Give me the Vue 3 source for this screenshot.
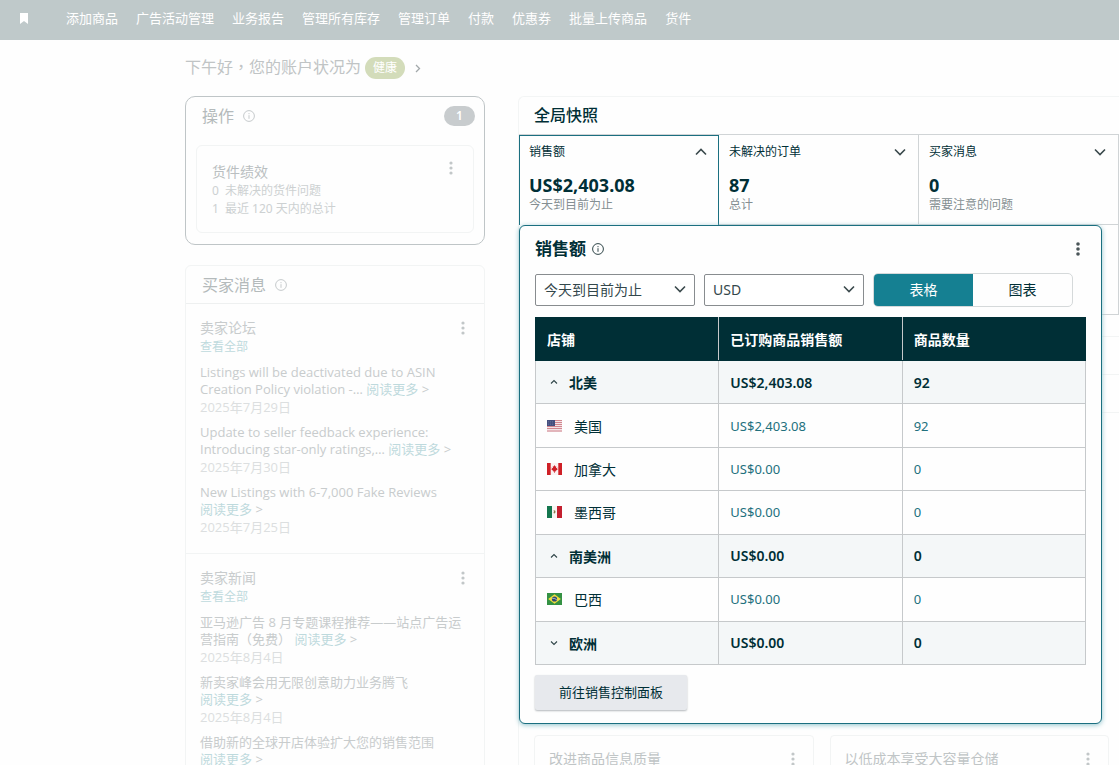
<script setup>
import { ref } from 'vue'

const nav = ['添加商品', '广告活动管理', '业务报告', '管理所有库存', '管理订单', '付款', '优惠券', '批量上传商品', '货件']

const forum = [
  { lines: ['Listings will be deactivated due to ASIN', 'Creation Policy violation -…'], date: '2025年7月29日' },
  { lines: ['Update to seller feedback experience:', 'Introducing star-only ratings,…'], date: '2025年7月30日' },
  { lines: ['New Listings with 6-7,000 Fake Reviews', ''], date: '2025年7月25日' }
]
const news = [
  { lines: ['亚马逊广告 8 月专题课程推荐——站点广告运', '营指南（免费）'], date: '2025年8月4日' },
  { lines: ['新卖家峰会用无限创意助力业务腾飞', ''], date: '2025年8月4日' },
  { lines: ['借助新的全球开店体验扩大您的销售范围', ''] }
]
const sections = [
  { title: '卖家论坛', items: forum },
  { title: '卖家新闻', items: news }
]

const cards = [
  { title: '销售额', value: 'US$2,403.08', note: '今天到目前为止', open: true },
  { title: '未解决的订单', value: '87', note: '总计', open: false },
  { title: '买家消息', value: '0', note: '需要注意的问题', open: false }
]

const rows = [
  { group: true, open: true, name: '北美', sales: 'US$2,403.08', units: '92' },
  { flag: 'us', name: '美国', sales: 'US$2,403.08', units: '92' },
  { flag: 'ca', name: '加拿大', sales: 'US$0.00', units: '0' },
  { flag: 'mx', name: '墨西哥', sales: 'US$0.00', units: '0' },
  { group: true, open: true, name: '南美洲', sales: 'US$0.00', units: '0' },
  { flag: 'br', name: '巴西', sales: 'US$0.00', units: '0' },
  { group: true, open: false, name: '欧洲', sales: 'US$0.00', units: '0' }
]

const range = ref('today')
const currency = ref('USD')
</script>

<template>
  <div class="page">
    <header class="topbar">
      <button class="plain bookmark" aria-label="书签">
        <svg width="8" height="11" viewBox="0 0 8 11"><path d="M0 0h8v11L4 8 0 11z" fill="#fff" /></svg>
      </button>
      <nav>
        <a v-for="item in nav" :key="item" href="#">{{ item }}</a>
      </nav>
    </header>

    <main>
      <div class="greeting">
        <span>下午好<span class="comma">，</span>您的账户状况为</span>
        <a href="#" class="health">健康</a>
        <svg width="6" height="9" viewBox="0 0 6 9" fill="none" stroke="#a2a8aa" stroke-width="1.3"><path d="M1 1l3.5 3.5L1 8" /></svg>
      </div>

      <div class="columns">
        <aside>
          <section class="actions">
            <div class="actions-head">
              <h2>操作</h2>
              <svg class="info" width="12" height="12" viewBox="0 0 12 12" fill="none" stroke="currentColor"><circle cx="6" cy="6" r="5.4" /><path d="M6 5.2v3.6M6 3.1v1.1" /></svg>
              <span class="count">1</span>
            </div>
            <div class="task">
              <div>
                <h3>货件绩效</h3>
                <p><span>0</span>未解决的货件问题</p>
                <p><span>1</span>最近 120 天内的总计</p>
              </div>
              <button class="plain dots" aria-label="更多"><svg width="4" height="14" viewBox="0 0 4 14" fill="currentColor"><circle cx="2" cy="2" r="1.6" /><circle cx="2" cy="7" r="1.6" /><circle cx="2" cy="12" r="1.6" /></svg></button>
            </div>
          </section>

          <section class="messages">
            <div class="messages-head">
              <h2>买家消息</h2>
              <svg class="info" width="12" height="12" viewBox="0 0 12 12" fill="none" stroke="currentColor"><circle cx="6" cy="6" r="5.4" /><path d="M6 5.2v3.6M6 3.1v1.1" /></svg>
            </div>
            <div v-for="s in sections" :key="s.title" class="feed">
              <div class="feed-head">
                <h3>{{ s.title }}</h3>
                <button class="plain dots" aria-label="更多"><svg width="4" height="14" viewBox="0 0 4 14" fill="currentColor"><circle cx="2" cy="2" r="1.6" /><circle cx="2" cy="7" r="1.6" /><circle cx="2" cy="12" r="1.6" /></svg></button>
              </div>
              <a href="#" class="all">查看全部</a>
              <article v-for="(it, i) in s.items" :key="i">
                <div>{{ it.lines[0] }}</div>
                <div>{{ it.lines[1] }} <a href="#">阅读更多</a> &gt;</div>
                <time v-if="it.date">{{ it.date }}</time>
              </article>
            </div>
          </section>
        </aside>

        <section class="snapshot">
          <h2>全局快照</h2>
          <div class="cards">
            <button v-for="c in cards" :key="c.title" class="plain card" :class="{ open: c.open }">
              <span class="card-head">
                {{ c.title }}
                <svg width="12" height="8" viewBox="0 0 12 8" fill="none" stroke="#3b4a4d" stroke-width="1.6"><path :d="c.open ? 'M1 6.5l5-5 5 5' : 'M1 1.5l5 5 5-5'" /></svg>
              </span>
              <strong>{{ c.value }}</strong>
              <small>{{ c.note }}</small>
            </button>
            <div class="card"></div>
            <div class="card"></div>
            <div class="card"></div>

            <div class="popup">
              <div class="popup-head">
                <h2>销售额</h2>
                <svg width="12" height="12" viewBox="0 0 12 12" fill="none" stroke="#2f4548"><circle cx="6" cy="6" r="5.4" /><path d="M6 5.2v3.6M6 3.1v1.1" /></svg>
                <button class="plain dots" aria-label="更多"><svg width="4" height="14" viewBox="0 0 4 14" fill="currentColor"><circle cx="2" cy="2" r="1.8" /><circle cx="2" cy="7" r="1.8" /><circle cx="2" cy="12" r="1.8" /></svg></button>
              </div>

              <div class="controls">
                <label class="pick">
                  <select v-model="range" aria-label="时间范围">
                    <option value="today">今天到目前为止</option>
                  </select>
                  <svg width="12" height="8" viewBox="0 0 12 8" fill="none" stroke="#3b4a4d" stroke-width="1.6"><path d="M1 1.5l5 5 5-5" /></svg>
                </label>
                <label class="pick">
                  <select v-model="currency" aria-label="货币">
                    <option>USD</option>
                  </select>
                  <svg width="12" height="8" viewBox="0 0 12 8" fill="none" stroke="#3b4a4d" stroke-width="1.6"><path d="M1 1.5l5 5 5-5" /></svg>
                </label>
                <div class="toggle">
                  <button class="plain on">表格</button>
                  <button class="plain">图表</button>
                </div>
              </div>

              <table>
                <thead>
                  <tr><th>店铺</th><th>已订购商品销售额</th><th>商品数量</th></tr>
                </thead>
                <tbody>
                  <tr v-for="r in rows" :key="r.name" :class="{ group: r.group }">
                    <td>
                      <div class="store">
                        <svg v-if="r.group" class="fold" width="8" height="6" viewBox="0 0 8 6" fill="none" stroke="#2f4548" stroke-width="1.1"><path :d="r.open ? 'M1 4.5l3-3 3 3' : 'M1 1.5l3 3 3-3'" /></svg>
                        <svg v-else-if="r.flag === 'us'" width="15" height="12" viewBox="0 0 15 12">
                          <path fill="#f3e4e7" d="M0 0h15v12H0z" />
                          <path stroke="#d2868f" d="M0 .5h15M0 2.5h15M0 4.5h15M0 6.5h15M0 8.5h15M0 11h15" />
                          <path fill="#45507f" d="M0 0h8v6H0z" />
                          <path stroke="#6d76a0" stroke-width=".6" stroke-dasharray="1 1" d="M1 1.5h6M1 3h6M1 4.5h6" />
                        </svg>
                        <svg v-else-if="r.flag === 'ca'" width="15" height="12" viewBox="0 0 15 12">
                          <path fill="#fbf3f3" d="M0 0h15v12H0z" />
                          <path fill="#cf2027" d="M0 0h3.7v12H0zM11.3 0H15v12h-3.7z" />
                          <path fill="#cf2027" d="M7.5 2l.8 1.6.9-.3-.2 1.9 1.5-.6-.4 1.2.6.6-2.2 1.6.1.7-.8-.1V10h-.6V8.600l-.8.1.1-.7-2.200-1.600.6-.6-.4-1.200 1.500.6-.2-1.900.9.3z" />
                        </svg>
                        <svg v-else-if="r.flag === 'mx'" width="15" height="12" viewBox="0 0 15 12">
                          <path fill="#f7f5f2" d="M0 0h15v12H0z" />
                          <path fill="#14764e" d="M0 0h5v12H0z" />
                          <path fill="#c3202f" d="M10 0h5v12h-5z" />
                          <path fill="#8a7a4a" d="M6.500 4.200l1.600.3.5 1.500-.8 1.500-1.400-.6.6-1.200z" />
                        </svg>
                        <svg v-else width="15" height="12" viewBox="0 0 15 12">
                          <path fill="#349143" d="M0 0h15v12H0z" />
                          <path fill="#f1dc3c" d="M7.500 1.300L13.800 6l-6.300 4.700L1.200 6z" />
                          <circle cx="7.500" cy="6" r="2.600" fill="#2b4a72" />
                          <path d="M5.200 5.300q2.600-.4 4.600 1.500" fill="none" stroke="#dfe8dd" stroke-width=".7" />
                        </svg>
                        <span>{{ r.name }}</span>
                      </div>
                    </td>
                    <td><template v-if="r.group">{{ r.sales }}</template><a v-else href="#">{{ r.sales }}</a></td>
                    <td><template v-if="r.group">{{ r.units }}</template><a v-else href="#">{{ r.units }}</a></td>
                  </tr>
                </tbody>
              </table>

              <button class="plain go">前往销售控制面板</button>
            </div>
          </div>

          <div class="behind">
            <div></div><div></div><div></div>
          </div>

          <div class="tips">
            <div class="tip">
              <h3>改进商品信息质量</h3>
              <button class="plain dots" aria-label="更多"><svg width="4" height="14" viewBox="0 0 4 14" fill="currentColor"><circle cx="2" cy="2" r="1.6" /><circle cx="2" cy="7" r="1.6" /><circle cx="2" cy="12" r="1.6" /></svg></button>
            </div>
            <div class="tip">
              <h3>以低成本享受大容量仓储</h3>
              <button class="plain dots" aria-label="更多"><svg width="4" height="14" viewBox="0 0 4 14" fill="currentColor"><circle cx="2" cy="2" r="1.6" /><circle cx="2" cy="7" r="1.6" /><circle cx="2" cy="12" r="1.6" /></svg></button>
            </div>
          </div>
        </section>
      </div>
    </main>
  </div>
</template>

<style>
body {
  margin: 0;
  background: #fefefe;
}
</style>

<style scoped>
.page {
  height: 100vh;
  overflow: hidden;
  font-family: "Noto Sans", "Noto Sans CJK SC", sans-serif;
  font-size: 13px;
  color: #002f36;
}
.page * {
  box-sizing: border-box;
}
h2, h3, p {
  margin: 0;
  font-weight: 400;
}
svg {
  display: block;
  flex: none;
}
a {
  text-decoration: none;
}
.plain {
  margin: 0;
  padding: 0;
  border: 0;
  background: none;
  font: inherit;
  color: inherit;
  cursor: pointer;
}
.topbar {
  display: flex;
  align-items: center;
  height: 40px;
  padding: 0 20px 4px;
  background: #bfc9ca;
}
.bookmark {
  width: 46px;
}
nav {
  display: flex;
  gap: 18px;
  line-height: 20px;
}
nav a {
  color: #fff;
  white-space: nowrap;
}
main {
  padding-left: 185px;
}
.greeting {
  display: flex;
  align-items: center;
  height: 56px;
  font-size: 16px;
  line-height: 22px;
  color: #c0c4c5;
}
.greeting > span {
  padding-bottom: 3px;
}
.comma {
  font-family: "Noto Sans CJK TC", sans-serif;
}
.health {
  margin: 0 10px 0 4px;
  padding: 0 8px;
  border-radius: 11px;
  background: #d3dcba;
  color: #fff;
  font-size: 12px;
  line-height: 22px;
}
.columns {
  display: flex;
  gap: 33px;
  align-items: flex-start;
}
aside {
  flex: none;
  width: 300px;
}
.actions {
  height: 149px;
  padding: 0 10px;
  border: 1px solid #bfc5c7;
  border-radius: 10px;
}
.actions-head, .messages-head {
  display: flex;
  align-items: center;
  gap: 9px;
  color: #b4babb;
}
.actions-head {
  height: 38px;
  margin-right: -1px;
  padding-left: 6px;
}
.actions-head h2, .messages-head h2 {
  font-size: 16px;
  line-height: 24px;
}
.info {
  color: #c6cacc;
}
.count {
  margin-left: auto;
  width: 31px;
  border-radius: 10px;
  background: #c8ccce;
  color: #fff;
  font-size: 12px;
  font-weight: 600;
  line-height: 20px;
  text-align: center;
}
.task {
  display: flex;
  justify-content: space-between;
  align-items: flex-start;
  height: 88px;
  margin-top: 10px;
  padding: 15px 20px 0 15px;
  border: 1px solid #f2f4f4;
  border-radius: 6px;
  color: #cdd1d2;
  font-size: 12px;
  line-height: 18px;
}
.task h3 {
  font-size: 14px;
  line-height: 21px;
  color: #babfc1;
}
.task p span {
  display: inline-block;
  width: 13px;
}
.dots {
  color: #c2c7c8;
}
.messages {
  margin-top: 20px;
  border: 1px solid #f2f4f4;
  border-radius: 6px 6px 0 0;
}
.messages-head {
  height: 38px;
  padding-left: 16px;
  border-bottom: 1px solid #eef0f0;
}
.feed {
  padding: 14px 14px 17px;
  border-bottom: 1px solid #f2f4f4;
  line-height: 17px;
  color: #c8cccd;
}
.feed-head {
  display: flex;
  justify-content: space-between;
  align-items: center;
  padding-right: 5px;
}
.feed-head h3 {
  font-size: 14px;
  line-height: 20px;
}
.feed a {
  color: #bedadd;
}
.feed .all {
  display: block;
  margin-bottom: 9px;
  font-size: 12px;
  line-height: 17px;
}
article {
  font-family: "Open Sans", "Noto Sans CJK SC", sans-serif;
}
article + article {
  margin-top: 8px;
}
article div {
  white-space: nowrap;
}
time {
  display: block;
  line-height: 18px;
  color: #dcdfe0;
}
.snapshot {
  flex: 1;
  min-width: 0;
  border: 1px solid #f3f5f5;
  border-right: 0;
  border-radius: 6px 0 0 0;
}
.snapshot > h2 {
  padding: 0 15px;
  font-size: 16px;
  line-height: 37px;
  font-weight: 500;
}
.cards {
  position: relative;
  display: grid;
  grid-template-columns: repeat(3, 1fr);
  grid-auto-rows: 90px;
  border-top: 1px solid #d0d4d6;
}
.card {
  display: flex;
  flex-direction: column;
  padding: 8px 12px 0 10px;
  border-right: 1px solid #d0d4d6;
  border-bottom: 1px solid #d0d4d6;
  text-align: left;
}
.card.open {
  padding: 7px 11px 0 9px;
  border: 1px solid #1b6f80;
  border-bottom: 0;
}
.card-head {
  display: flex;
  justify-content: space-between;
  align-items: center;
  width: 100%;
  font-size: 12px;
  line-height: 17px;
}
.card strong {
  margin-top: 13px;
  font-size: 18px;
  line-height: 24px;
  font-weight: 700;
}
.card small {
  font-size: 12px;
  line-height: 16px;
  color: #858f92;
}
.popup {
  position: absolute;
  z-index: 2;
  top: 90px;
  left: 0;
  right: 17px;
  padding: 9px 15px 13px;
  border: 1px solid #1b6f80;
  border-radius: 6px;
  background: #fefefe;
  box-shadow: 0 1px 5px #8fc3cc;
}
.popup-head {
  display: flex;
  align-items: center;
  gap: 6px;
}
.popup-head h2 {
  font-size: 17px;
  line-height: 28px;
  font-weight: 700;
}
.popup-head .dots {
  margin-left: auto;
  margin-right: 6px;
  color: #4a5558;
}
.controls {
  display: flex;
  align-items: center;
  gap: 9px;
  margin: 10px 13px 10px 0;
}
.pick {
  position: relative;
  flex: none;
  width: 160px;
}
.pick select {
  display: block;
  width: 100%;
  height: 32px;
  padding: 0 28px 2px 8px;
  border: 1px solid #888c8f;
  border-radius: 2px;
  background: #fff;
  appearance: none;
  font: inherit;
  font-size: 14px;
  color: #33474b;
}
.pick svg {
  position: absolute;
  right: 9px;
  top: 11px;
  pointer-events: none;
}
.toggle {
  display: flex;
  flex: 1;
  height: 34px;
  border: 1px solid #d5d9da;
  border-radius: 5px;
  overflow: hidden;
  font-size: 14px;
}
.toggle button {
  flex: 1;
  padding-bottom: 2px;
}
.toggle .on {
  background: #158092;
  color: #fff;
}
table {
  width: 100%;
  height: 348px;
  table-layout: fixed;
  border-collapse: collapse;
  font-size: 13px;
}
th, td {
  padding: 0 11px;
  border: 1px solid #c6c9cb;
  text-align: left;
}
th {
  height: 43px;
  border-top-color: #002f36;
  border-bottom-color: #002f36;
  background: #002f36;
  color: #fff;
  font-size: 14px;
  font-weight: 700;
}
th:first-child {
  border-left-color: #002f36;
}
th:last-child {
  border-right-color: #002f36;
}
td a {
  color: #22707d;
}
.store {
  display: flex;
  align-items: center;
  gap: 12px;
  font-size: 14px;
}
.fold {
  margin: 0 -1px 0 3px;
}
.group td {
  background: #f4f7f8;
  font-size: 14px;
  font-weight: 600;
}
.go {
  display: block;
  margin-top: 10px;
  padding: 0 24px;
  border-radius: 2px;
  background: #e7e9ed;
  box-shadow: 0 1px 2px #b4b8bc;
  line-height: 35px;
}
.behind {
  margin-top: 21px;
  height: 399px;
}
.behind div {
  height: 38px;
  border-top: 1px solid #f2f4f4;
}
.tips {
  display: grid;
  grid-template-columns: 1fr 1fr;
  gap: 16px;
  padding: 0 10px 0 15px;
}
.tip {
  display: flex;
  justify-content: space-between;
  align-items: flex-start;
  height: 120px;
  padding: 13px 18px 0 14px;
  border: 1px solid #f2f4f4;
  border-radius: 4px;
  color: #c0c5c6;
}
.tip h3 {
  font-size: 14px;
  line-height: 20px;
}
.tip .dots {
  padding-top: 3px;
}
</style>
